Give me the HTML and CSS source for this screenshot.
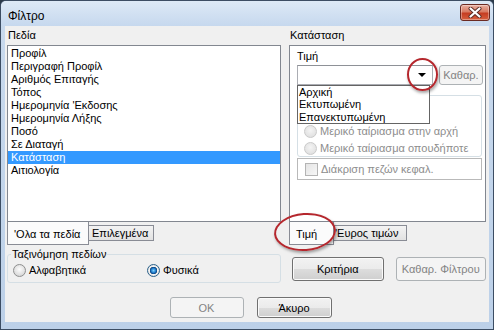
FILE: index.html
```html
<!DOCTYPE html>
<html lang="el">
<head>
    <meta charset="UTF-8">
    <title>Φίλτρο</title>
    <link rel="stylesheet" href="styles.css">
</head>
<body>
<div class="window">
    <div class="titlebar">
        <span class="title">Φίλτρο</span>
        <span class="close">
            <svg width="14" height="11" viewBox="0 0 14 11">
                <path d="M2.5 1.5 L11.5 9.5 M11.5 1.5 L2.5 9.5" stroke="#5a2a24" stroke-width="4" stroke-linecap="round"/>
                <path d="M2.5 1.5 L11.5 9.5 M11.5 1.5 L2.5 9.5" stroke="#fff" stroke-width="2.2" stroke-linecap="round"/>
            </svg>
        </span>
    </div>
    <div class="client">
        <div class="columns">
            <div class="col">
                <div class="caption">Πεδία</div>
                <ul class="listbox">
                    <li>Προφίλ</li>
                    <li>Περιγραφή Προφίλ</li>
                    <li>Αριθμός Επιταγής</li>
                    <li>Τόπος</li>
                    <li>Ημερομηνία 'Εκδοσης</li>
                    <li>Ημερομηνία Λήξης</li>
                    <li>Ποσό</li>
                    <li>Σε Διαταγή</li>
                    <li class="selected">Κατάσταση</li>
                    <li>Αιτιολογία</li>
                </ul>
                <div class="tabs">
                    <span class="tab selected tab-all">'Ολα τα πεδία</span>
                    <span class="tab tab-picked">Επιλεγμένα</span>
                </div>
                <fieldset class="sort">
                    <legend>Ταξινόμηση πεδίων</legend>
                    <label class="radio radio-alpha"><span class="dot"></span>Αλφαβητικά</label>
                    <label class="radio checked"><span class="dot"></span>Φυσικά</label>
                </fieldset>
            </div>
            <div class="col">
                <div class="caption">Κατάσταση</div>
                <div class="panel">
                    <div class="field-label">Τιμή</div>
                    <div class="combo-row">
                        <div class="combo"><span class="arrow"></span></div>
                        <span class="btn disabled btn-clear">Καθαρ.</span>
                    </div>
                    <div class="match-group">
                        <label class="radio disabled"><span class="dot"></span>Μερικό ταίριασμα στην αρχή</label>
                        <label class="radio disabled"><span class="dot"></span>Μερικό ταίριασμα οπουδήποτε</label>
                    </div>
                    <div class="case-box">
                        <span class="check"></span>Διάκριση πεζών κεφαλ.
                    </div>
                    <ul class="dropdown">
                        <li>Αρχική</li>
                        <li>Εκτυπωμένη</li>
                        <li>Επανεκτυπωμένη</li>
                    </ul>
                </div>
                <div class="tabs">
                    <span class="tab selected tab-value">Τιμή</span>
                    <span class="tab tab-range">'Ευρος τιμών</span>
                </div>
                <div class="action-row">
                    <span class="btn btn-criteria">Κριτήρια</span>
                    <span class="btn disabled btn-reset">Καθαρ. Φίλτρου</span>
                </div>
            </div>
        </div>
        <div class="dialog-buttons">
            <span class="btn disabled btn-ok">OK</span>
            <span class="btn btn-cancel">Άκυρο</span>
        </div>
    </div>
    <span class="mark mark-arrow"></span>
    <span class="mark mark-tab"></span>
</div>
</body>
</html>
```

FILE: styles.css
```css
*{
    margin: 0;
    padding: 0;
    box-sizing: border-box;
}
body{
    width: 494px;
    height: 330px;
    overflow: hidden;
    background-color: #2b3a4a;
    font-family: "Liberation Sans", "DejaVu Sans", sans-serif;
    font-size: 11px;
    color: #000;
}
.window{
    position: relative;
    width: 494px;
    height: 330px;
    border: 1px solid #3c4d63;
    border-radius: 6px 6px 0 0;
    background: linear-gradient(#c9daee, #bcd0e8);
}
.titlebar{
    height: 25px;
    display: flex;
    justify-content: space-between;
    padding: 0 3px 0 7px;
    border-radius: 5px 5px 0 0;
    background: linear-gradient(#dde9f6, #c6d8ee);
}
.title{
    font-size: 12px;
    line-height: 12px;
    padding-top: 9px;
}
.close{
    width: 30px;
    height: 17px;
    margin-top: 3px;
    display: flex;
    align-items: center;
    justify-content: center;
    border: 1px solid #6b2a22;
    border-radius: 3px;
    background: linear-gradient(#eab0a2, #d87a62 45%, #c53d22 55%, #d7603f);
    box-shadow: inset 0 0 0 1px rgba(255,255,255,.35);
}
.client{
    height: 296px;
    margin: 0 4px;
    padding-left: 2px;
    background-color: #f0f0f0;
}
.columns{
    display: grid;
    grid-template-columns: 274px 197px;
    column-gap: 8px;
}
.col{
    display: flex;
    flex-direction: column;
}
.caption{
    height: 19px;
    line-height: 19px;
    padding-left: 1px;
}
.listbox{
    list-style: none;
    height: 177px;
    padding-top: 1px;
    border: 1px solid #828790;
    background-color: #fff;
}
.listbox>li{
    height: 13px;
    line-height: 13px;
    padding-left: 3px;
}
.listbox>li.selected{
    background-color: #3399ff;
    color: #fff;
}
.tabs{
    display: flex;
    align-items: flex-start;
    height: 23px;
}
.tab{
    height: 16px;
    margin-top: 3px;
    line-height: 14px;
    padding-left: 3px;
    border: 1px solid #898c95;
    border-left: none;
    background: linear-gradient(#f3f3f3, #e2e2e2);
}
.tab.selected{
    height: 23px;
    margin-top: 0;
    padding: 6px 0 0 6px;
    line-height: 13px;
    border-top: none;
    border-left: 1px solid #898c95;
    background: #fbfbfb;
}
.tab-all{ width: 82px; }
.tab-picked{ width: 65px; }
.tab-value{ width: 45px; }
.tab-range{ width: 73px; padding-left: 1px; }
.sort{
    display: flex;
    height: 35px;
    margin-top: 3px;
    padding: 3px 5px 0;
    border: 1px solid #d5dfe5;
    border-radius: 3px;
}
.sort>legend{
    margin-left: -2px;
    padding: 0 1px;
    line-height: 13px;
}
.radio{
    display: flex;
    align-items: center;
    gap: 3px;
    height: 13px;
    line-height: 13px;
}
.radio-alpha{
    width: 134px;
}
.dot{
    width: 13px;
    height: 13px;
    border: 1px solid #8e8f8f;
    border-radius: 50%;
    background: radial-gradient(circle at 50% 40%, #fdfdfd, #d6d6d6 80%);
}
.radio.checked .dot{
    background: radial-gradient(circle, #7fd3ff 0, #1e78c8 30%, #0b3f78 45%, #f4f4f4 50%, #d6d6d6 90%);
    border-color: #2c628b;
}
.radio.disabled{
    color: #8d8d8d;
}
.radio.disabled .dot{
    border-color: #cacaca;
    background: radial-gradient(circle at 50% 40%, #f4f4f4, #e0e0e0 80%);
}
.panel{
    position: relative;
    height: 177px;
    padding-left: 7px;
    border: 1px solid #828790;
    background-color: #fff;
}
.field-label{
    margin-top: 4px;
    line-height: 13px;
}
.combo-row{
    display: flex;
    margin-top: 2px;
    height: 20px;
}
.combo{
    width: 136px;
    height: 20px;
    display: flex;
    align-items: center;
    justify-content: flex-end;
    padding-right: 6px;
    border: 1px solid #abadb3;
    border-top-color: #8e9197;
    background-color: #fff;
}
.arrow{
    width: 0;
    height: 0;
    border-top: 4px solid #000;
    border-left: 4px solid transparent;
    border-right: 4px solid transparent;
}
.match-group{
    display: flex;
    flex-direction: column;
    gap: 4px;
    width: 185px;
    height: 62px;
    margin-top: 10px;
    padding: 29px 0 0 6px;
    border: 1px solid #d5dfe5;
    border-radius: 3px;
}
.case-box{
    display: flex;
    align-items: center;
    gap: 3px;
    width: 185px;
    height: 22px;
    margin-top: 1px;
    padding-left: 7px;
    border: 1px solid #b9b9b9;
    color: #8d8d8d;
}
.check{
    width: 13px;
    height: 13px;
    border: 1px solid #b4b4b4;
    background: linear-gradient(135deg, #e4e4e4, #f7f7f7);
}
.dropdown{
    position: absolute;
    left: 7px;
    top: 39px;
    width: 133px;
    height: 39px;
    list-style: none;
    border: 1px solid #646464;
    background-color: #fff;
}
.dropdown>li{
    height: 12.4px;
    line-height: 12px;
    padding-left: 1px;
}
.btn{
    display: flex;
    align-items: center;
    justify-content: center;
    height: 21px;
    border: 1px solid #707070;
    border-radius: 3px;
    background: linear-gradient(#f2f2f2, #ebebeb 50%, #dddddd 50%, #cfcfcf);
    box-shadow: inset 0 0 0 1px #fafafa;
}
.btn.disabled{
    border-color: #adb2b5;
    background: #f4f4f4;
    box-shadow: none;
    color: #838383;
}
.btn-clear{
    width: 44px;
    height: 20px;
    margin-left: 6px;
}
.action-row{
    display: flex;
    gap: 12px;
    margin-top: 12px;
    padding-left: 3px;
}
.btn-criteria{ width: 92px; height: 24px; }
.btn-reset{ width: 91px; height: 24px; }
.dialog-buttons{
    display: flex;
    justify-content: center;
    gap: 13px;
    margin-top: 14px;
    padding-left: 5px;
}
.btn-ok{ width: 74px; }
.btn-cancel{ width: 75px; }
.mark{
    position: absolute;
    border: 2px solid #b5272d;
    border-radius: 50%;
    box-shadow: 1px 2px 3px rgba(0,0,0,.35);
}
.mark-arrow{
    left: 406px;
    top: 57px;
    width: 31px;
    height: 33px;
}
.mark-tab{
    left: 273px;
    top: 212px;
    width: 62px;
    height: 38px;
    transform: rotate(-4deg);
}
```
